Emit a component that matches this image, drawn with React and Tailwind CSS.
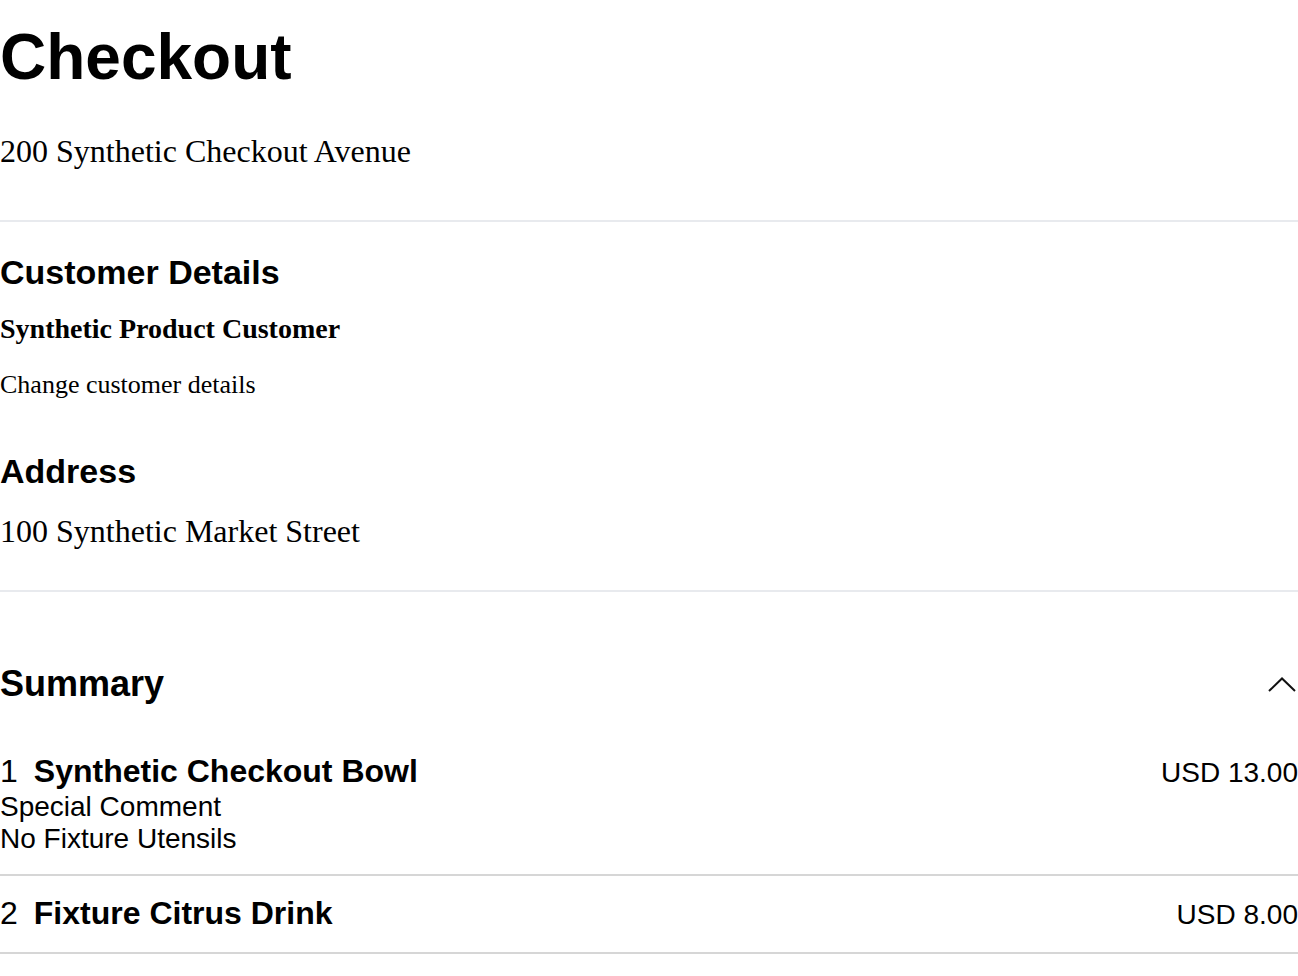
const sans = { fontFamily: '"Liberation Sans", Arial, sans-serif' }

function ChevronUp() {
  return (
    <svg width="28" height="15" viewBox="0 0 28 15" fill="none" className="shrink-0 mr-[2px]">
      <polyline points="1,14 14,1.5 27,14" stroke="#111" strokeWidth="2" />
    </svg>
  )
}

const items = [
  { qty: 1, name: 'Synthetic Checkout Bowl', price: 'USD 13.00', notes: ['Special Comment', 'No Fixture Utensils'] },
  { qty: 2, name: 'Fixture Citrus Drink', price: 'USD 8.00', notes: [] }
]

export default function App() {
  return (
    <div className="w-full bg-white text-black font-['Liberation_Serif',serif]">
      <h1 className="mt-[25px] text-[64px] leading-[64px] font-bold font-['Liberation_Sans',Arial,sans-serif]">Checkout</h1>
      <p className="mt-[46px] text-[32px] leading-[32px]">200 Synthetic Checkout Avenue</p>

      <div className="mt-[53px] h-[2px] bg-[#e8eaee]" />

      <h2 className="mt-[33px] text-[34px] leading-[34px] font-bold font-['Liberation_Sans',Arial,sans-serif]">Customer Details</h2>
      <p className="mt-[26px] text-[28px] leading-[28px] font-bold">Synthetic Product Customer</p>
      <p className="mt-[29px] text-[26px] leading-[26px]">Change customer details</p>

      <h2 className="mt-[56px] text-[34px] leading-[34px] font-bold font-['Liberation_Sans',Arial,sans-serif]">Address</h2>
      <p className="mt-[27px] text-[32px] leading-[32px]">100 Synthetic Market Street</p>

      <div className="mt-[43px] h-[2px] bg-[#e8eaee]" />

      <div style={sans}>
        <div className="mt-[74px] flex items-center justify-between">
          <h2 className="text-[36px] leading-[36px] font-bold">Summary</h2>
          <ChevronUp />
        </div>

        <ul className="mt-[33px]">
          {items.map((item) => (
            <li
              key={item.qty}
              className={item.notes.length > 0 ? 'pt-5 pb-[19px] border-b-2 border-[#d6d6d6]' : 'pt-[21px] pb-[21px] border-b-2 border-[#d6d6d6]'}
            >
              <div className="flex items-baseline justify-between">
                <div className="flex items-baseline gap-4">
                  <span className="text-[32px] leading-[32px]">{item.qty}</span>
                  <span className="text-[32px] leading-[32px] font-bold">{item.name}</span>
                </div>
                <span className="text-[28px] leading-[32px]">{item.price}</span>
              </div>
              {item.notes.length > 0 && (
                <div className="mt-[2px] text-[28px] leading-[32px]">
                  {item.notes.map((n) => (
                    <div key={n}>{n}</div>
                  ))}
                </div>
              )}
            </li>
          ))}
        </ul>
      </div>
    </div>
  )
}
